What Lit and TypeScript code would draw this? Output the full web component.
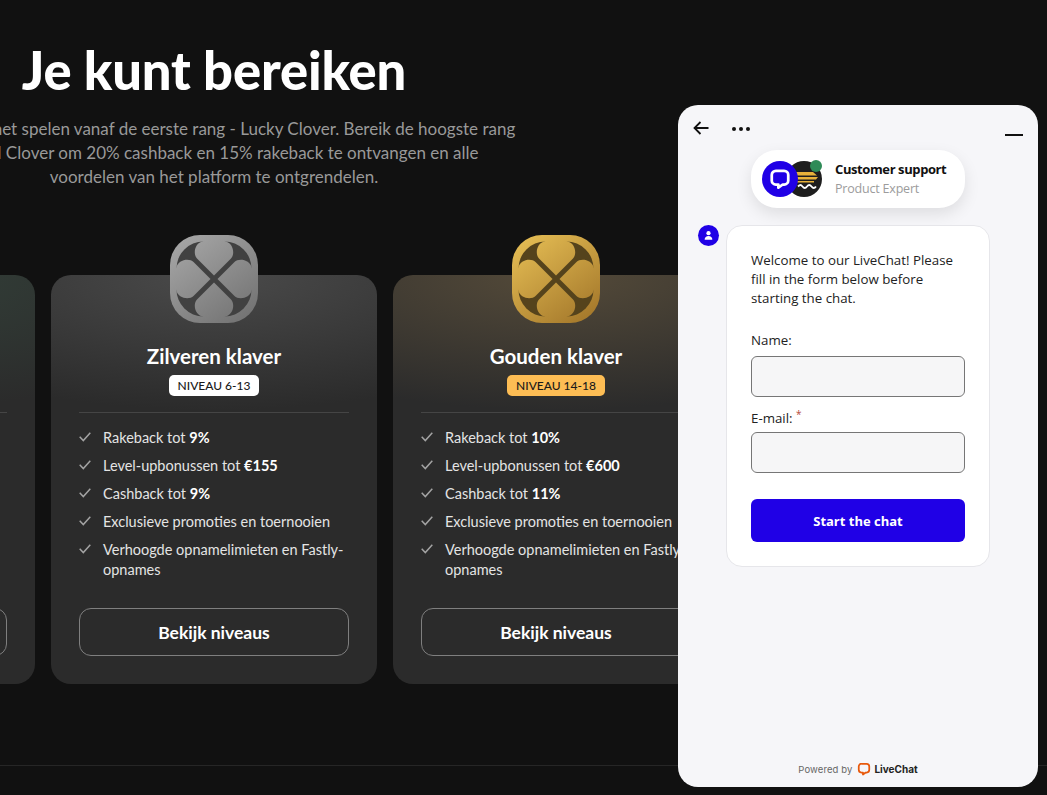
import { LitElement, html, css, svg } from "lit";
import { customElement } from "lit/decorators.js";

type Tier = {
  key: string; name: string; level: string; perks: unknown[];
  light: string; deep: string; dark: string;
};

const b = (t: string) => html`<strong>${t}</strong>`;

const TIERS: Tier[] = [
  { key: "green", name: "Smaragden klaver", level: "NIVEAU 1-5",
    perks: [html`Rakeback tot ${b("5%")}`, html`Level-upbonussen tot ${b("€50")}`, html`Cashback tot ${b("5%")}`],
    light: "#6fae8a", deep: "#3f7a58", dark: "#1f4030" },
  { key: "silver", name: "Zilveren klaver", level: "NIVEAU 6-13",
    perks: [html`Rakeback tot ${b("9%")}`, html`Level-upbonussen tot ${b("€155")}`, html`Cashback tot ${b("9%")}`,
      "Exclusieve promoties en toernooien", "Verhoogde opnamelimieten en Fastly-opnames"],
    light: "#a4a4a4", deep: "#747474", dark: "#414141" },
  { key: "gold", name: "Gouden klaver", level: "NIVEAU 14-18",
    perks: [html`Rakeback tot ${b("10%")}`, html`Level-upbonussen tot ${b("€600")}`, html`Cashback tot ${b("11%")}`,
      "Exclusieve promoties en toernooien", "Verhoogde opnamelimieten en Fastly-opnames"],
    light: "#e2ba52", deep: "#a67a2c", dark: "#55431c" },
];

const PETAL = "M44 40.5 L27 23.5 C23 19.5 24 8 33.500 6 L33.500 2 L54.500 2 L54.500 6 C64 8 65 19.5 61 23.5 Z";

function clover(t: Tier) {
  return svg`<svg class="clover" viewBox="0 0 88 88" width="88" height="88" aria-hidden="true">
    <defs>
      <linearGradient id="g-${t.key}" gradientUnits="userSpaceOnUse" x1="14" y1="4" x2="74" y2="84">
        <stop offset="0" stop-color=${t.light}></stop><stop offset="1" stop-color=${t.deep}></stop>
      </linearGradient>
      <clipPath id="c-${t.key}">
        ${[0, 90, 180, 270].map((r) => svg`<path d=${PETAL} transform="rotate(${r} 44 44)"></path>`)}
      </clipPath>
    </defs>
    <rect width="88" height="88" rx="30" fill="url(#g-${t.key})"></rect>
    <rect x="6.5" y="6.5" width="75" height="75" rx="27" fill=${t.dark}></rect>
    <rect width="88" height="88" fill="url(#g-${t.key})" clip-path="url(#c-${t.key})"></rect>
  </svg>`;
}

const check = html`<svg class="check" viewBox="0 0 12 10" width="12" height="10" aria-hidden="true"><path d="M.7 4.8 4.3 8.6 11.3.8" fill="none" stroke="#a3a3a3" stroke-width="1.5"></path></svg>`;

const bubble = (color: string, size: number) => html`<svg viewBox="0 0 24 24" width=${size} height=${size} aria-hidden="true"><path d="M7.5 3h9A4.5 4.5 0 0 1 21 7.5v6a4.5 4.5 0 0 1-4.5 4.5H15l-4.8 3.4V18H7.500A4.500 4.500 0 0 1 3 13.500v-6A4.500 4.500 0 0 1 7.500 3Z" fill="none" stroke=${color} stroke-width="3" stroke-linejoin="round"></path></svg>`;

@customElement("app-root")
export class AppRoot extends LitElement {
  static styles = css`
    :host { display: block; position: relative; width: 100%; height: 795px; overflow: hidden; background: #111111; color: #fff; font-family: "Lato", "Liberation Sans", sans-serif; }
    * { box-sizing: border-box; }
    .page { height: 100%; display: flex; flex-direction: column; }
    .section { width: 1010px; margin-left: -291px; padding-top: 38px; display: flex; flex-direction: column; align-items: center; }
    h1 { margin: 0; font-size: 52.500px; line-height: 64px; font-weight: 900; letter-spacing: -.15px; white-space: nowrap; text-align: center; }
    .lead { margin: 15px 0 0; font-size: 17px; line-height: 24px; color: #999999; text-align: center; white-space: nowrap; }
    .cards { align-self: stretch; display: flex; gap: 16px; margin-top: 86px; }
    .card { flex: 1 1 0; height: 409px; border-radius: 20px; padding: 0 28px 28px; display: flex; flex-direction: column; align-items: center; background: #2b2b2b; }
    .card.green { background: radial-gradient(120% 33% at 50% 0%, #334039 0%, #2b2b2b 100%); }
    .card.silver { background: radial-gradient(120% 33% at 50% 0%, #4a4a4a 0%, #2b2b2b 100%); }
    .card.gold { background: radial-gradient(120% 33% at 50% 0%, #544a39 0%, #2b2b2b 100%); }
    .clover { margin-top: -40px; flex: none; display: block; }
    h2 { margin: 21px 0 0; font-size: 20.500px; line-height: 24px; font-weight: 700; color: #fff; white-space: nowrap; }
    .badge { margin-top: 7px; height: 21px; padding: 0 9px; border-radius: 5px; background: #fff; color: #1a1a1a; font-size: 12px; font-weight: 500; line-height: 21px; white-space: nowrap; }
    .gold .badge { background: #fdbd54; }
    .rule { align-self: stretch; height: 1px; background: #454545; margin: 16px 0 15px; flex: none; }
    ul { align-self: stretch; list-style: none; margin: 0; padding: 0; display: flex; flex-direction: column; gap: 8px; }
    li { display: flex; gap: 12px; font-size: 14.5px; line-height: 20px; color: #e4e4e4; }
    li strong { color: #fff; font-weight: 700; }
    .check { flex: none; margin-top: 4px; }
    .cta { margin-top: auto; align-self: stretch; height: 48px; border: 1px solid #7f7f7f; border-radius: 12px; background: none; color: #fff; font: 700 17.500px "Lato", sans-serif; flex: none; }
    .foot-rule { margin-top: 81px; height: 1px; background: #262626; flex: none; }

    .chat { position: absolute; left: 678px; top: 105px; width: 360px; height: 682px; border-radius: 20px; background: #f6f6f9; color: #111; font-family: "Open Sans", "Noto Sans", sans-serif; display: flex; flex-direction: column; overflow: hidden; }
    .bar { height: 45px; padding: 16px 15px 0 15px; display: flex; align-items: flex-start; flex: none; }
    .bar .more { margin-left: 23px; margin-top: 6px; display: flex; gap: 3px; }
    .more i { width: 4px; height: 4px; border-radius: 50%; background: #111; display: block; }
    .bar .min { margin-left: auto; margin-top: 13px; width: 18px; height: 2px; background: #111; }
    .agent { align-self: center; width: 214px; height: 58px; border-radius: 26px; background: #fff; box-shadow: 0 6px 16px rgba(0,0,0,.1); display: flex; align-items: center; padding-left: 11px; flex: none; }
    .avatars { position: relative; width: 73px; height: 36px; flex: none; display: flex; }
    .avatar { width: 36px; height: 36px; border-radius: 50%; display: flex; align-items: center; justify-content: center; flex: none; }
    .avatar.lc { background: #2000e6; position: relative; z-index: 1; }
    .avatar.brand { background: #1e1e1e; margin-left: -12px; }
    .online { position: absolute; left: 48px; top: -1px; width: 12px; height: 12px; border-radius: 50%; background: #2e8b57; z-index: 2; }
    .who { display: flex; flex-direction: column; line-height: 19px; white-space: nowrap; }
    .who b { font-size: 13px; letter-spacing: -.4px; font-weight: 700; color: #111; }
    .who span { font-size: 12.500px; letter-spacing: -.2px; color: #9c9c9c; }
    .thread { display: flex; gap: 7px; padding: 17px 0 0 20px; align-items: flex-start; }
    .me { width: 21px; height: 21px; border-radius: 50%; background: #2000e6; display: flex; align-items: center; justify-content: center; flex: none; }
    .msg { width: 264px; height: 342px; background: #fff; border: 1px solid #e6e6ea; border-radius: 16px; padding: 25px 24px 0; font-size: 13.3px; line-height: 19px; color: #222; display: flex; flex-direction: column; }
    .msg p { margin: 0 0 23px; }
    .msg label { display: block; height: 19px; margin-bottom: 6px; }
    .msg label.req { margin-top: -2px; margin-bottom: 8px; }
    .msg label em { color: #b5493a; font-style: normal; font-size: 10px; vertical-align: 5px; }
    .field { height: 41px; border: 1px solid #767676; border-radius: 6px; background: #f6f6f7; margin-bottom: 10px; flex: none; }
    .start { height: 43px; margin-top: 16px; border: 0; border-radius: 6px; background: #2000e6; color: #fff; font: 700 13px "Open Sans", sans-serif; flex: none; }
    .powered { margin-top: auto; height: 37px; padding-top: 1px; display: flex; align-items: center; justify-content: center; gap: 5px; font-family: "Inter", sans-serif; font-size: 9.5px; letter-spacing: .1px; color: #666; flex: none; }
    .powered b { color: #222; font-size: 10px; letter-spacing: 0; font-weight: 700; margin-left: -2px; }
  `;

  render() {
    return html`
      <div class="page">
        <section class="section">
          <h1>Je kunt bereiken</h1>
          <p class="lead">Begin met het spelen vanaf de eerste rang - Lucky Clover. Bereik de hoogste rang<br>Crystal Clover om 20% cashback en 15% rakeback te ontvangen en alle<br>voordelen van het platform te ontgrendelen.</p>
          <div class="cards">
            ${TIERS.map((t) => html`
              <article class="card ${t.key}">
                ${clover(t)}
                <h2>${t.name}</h2>
                <div class="badge">${t.level}</div>
                <div class="rule"></div>
                <ul>${t.perks.map((p) => html`<li>${check}<span>${p}</span></li>`)}</ul>
                <button class="cta">Bekijk niveaus</button>
              </article>`)}
          </div>
        </section>
        <div class="foot-rule"></div>
      </div>

      <aside class="chat">
        <div class="bar">
          <svg viewBox="0 0 16 14" width="16" height="14" aria-hidden="true"><path d="M15.500 7H1.500M7.500 1 1.500 7l6 6" fill="none" stroke="#111" stroke-width="1.800"></path></svg>
          <div class="more"><i></i><i></i><i></i></div>
          <div class="min"></div>
        </div>
        <div class="agent">
          <div class="avatars">
            <div class="avatar lc">${bubble("#fff", 22)}</div>
            <div class="avatar brand">
              <svg viewBox="0 0 36 36" width="36" height="36" aria-hidden="true">
                <path d="M10 11h17l4 3.500H10zM10 16h22l-2 2.500H10zM10 20h18v1.500H10z" fill="#e8b23a"></path>
                <path d="M12 25.500c2-2 3-2 4.500 0s3 2 4.500 0 3-2 4.500 0 3 2 4.500 0" fill="none" stroke="#fff" stroke-width="1.800"></path>
              </svg>
            </div>
            <div class="online"></div>
          </div>
          <div class="who"><b>Customer support</b><span>Product Expert</span></div>
        </div>
        <div class="thread">
          <div class="me">
            <svg viewBox="0 0 12 12" width="11" height="11" aria-hidden="true"><circle cx="6" cy="3.500" r="2.300" fill="#fff"></circle><path d="M1.800 10.500c0-2.600 1.900-4 4.200-4s4.200 1.400 4.200 4z" fill="#fff"></path></svg>
          </div>
          <div class="msg">
            <p>Welcome to our LiveChat! Please fill in the form below before starting the chat.</p>
            <label>Name:</label>
            <div class="field"></div>
            <label class="req">E-mail: <em>*</em></label>
            <div class="field"></div>
            <button class="start">Start the chat</button>
          </div>
        </div>
        <div class="powered">
          <span>Powered by</span>
          ${bubble("#e8590c", 14)}
          <b>LiveChat</b>
        </div>
      </aside>
    `;
  }
}
